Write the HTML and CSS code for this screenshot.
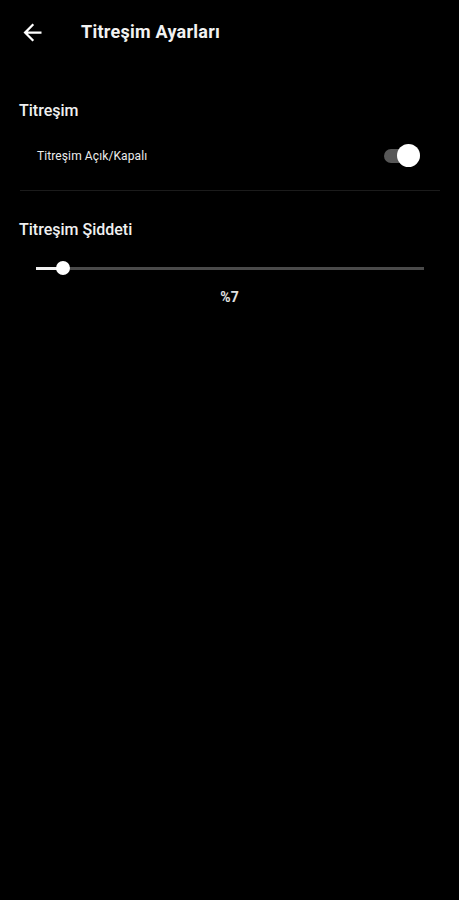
FILE: index.html
```html
<!DOCTYPE html>
<html lang="tr">
<head>
<meta charset="utf-8">
<title>Titreşim Ayarları</title>
<link rel="stylesheet" href="styles.css">
</head>
<body>
<div class="app">
  <header class="topbar">
    <span class="back">
      <svg viewBox="0 0 24 24" width="27" height="27"><path fill="#fff" d="M20 11H7.83l5.59-5.59L12 4l-8 8 8 8 1.41-1.41L7.83 13H20v-2z"/></svg>
    </span>
    <h1 class="title">Titreşim Ayarları</h1>
  </header>

  <section class="section">
    <h2 class="section-title">Titreşim</h2>
    <div class="row">
      <span class="row-label">Titreşim Açık/Kapalı</span>
      <span class="switch"><span class="switch-track"></span><span class="switch-thumb"></span></span>
    </div>
  </section>
  <div class="divider"></div>

  <section class="section">
    <h2 class="section-title second">Titreşim Şiddeti</h2>
    <div class="slider">
      <div class="slider-track">
        <div class="slider-fill" style="width:7%"><span class="slider-thumb"></span></div>
      </div>
    </div>
    <div class="value">%7</div>
  </section>
</div>
</body>
</html>
```

FILE: styles.css
```css
html, body {
  margin: 0;
  padding: 0;
  background: #000;
}
body {
  font-family: Roboto, "Noto Sans", "Liberation Sans", sans-serif;
  color: #fff;
  height: 900px;
}
.app {
  display: flex;
  flex-direction: column;
}
.topbar {
  height: 64px;
  display: flex;
  align-items: center;
  padding-left: 19px;
  box-sizing: border-box;
}
.back {
  width: 27px;
  height: 27px;
  display: flex;
}
.title {
  margin: 0 0 0 35px;
  font-size: 18px;
  font-weight: 700;
  color: #f2f2f2;
  line-height: 22px;
  letter-spacing: 0.25px;
}
.section-title {
  margin: 37px 0 0 19px;
  font-size: 16px;
  font-weight: 500;
  line-height: 20px;
  color: #f0f0f0;
}
.section-title.second {
  margin-top: 29px;
}
.row {
  margin-top: 11px;
  height: 48px;
  display: flex;
  align-items: center;
  justify-content: space-between;
  padding: 0 39px 0 37px;
}
.row-label {
  font-size: 12px;
  letter-spacing: 0.1px;
  color: #ececec;
}
.switch {
  position: relative;
  width: 36px;
  height: 24px;
  display: flex;
  align-items: center;
}
.switch-track {
  width: 36px;
  height: 14px;
  border-radius: 7px;
  background: #575757;
}
.switch-thumb {
  position: absolute;
  right: 0;
  top: 0;
  width: 23px;
  height: 23px;
  border-radius: 50%;
  background: #fff;
}
.divider {
  margin: 10px 19px 0 20px;
  height: 1px;
  background: #1b1b1b;
}
.slider {
  margin: 18px 35px 0 36px;
  height: 20px;
  display: flex;
  align-items: center;
}
.slider-track {
  flex: 1;
  height: 3px;
  background: #4a4a4a;
  position: relative;
  display: flex;
}
.slider-fill {
  height: 3px;
  background: #f0f0f0;
  position: relative;
}
.slider-thumb {
  position: absolute;
  right: -7px;
  top: -5.5px;
  width: 14px;
  height: 14px;
  border-radius: 50%;
  background: #fff;
}
.value {
  margin-top: 10px;
  text-align: center;
  font-size: 14px;
  font-weight: 700;
  line-height: 18px;
  color: #e0e0e0;
}
```
